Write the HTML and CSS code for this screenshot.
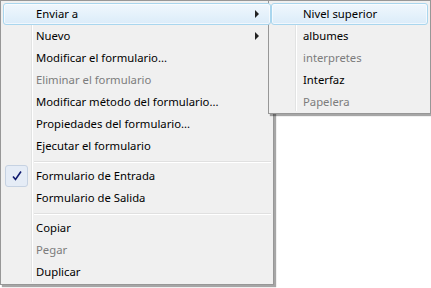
FILE: index.html
```html
<!DOCTYPE html>
<html lang="es">
<head>
  <meta charset="UTF-8" />
  <title>Menú contextual</title>
  <link rel="stylesheet" href="styles.css">
</head>
<body>
  <div class="desk">
    <div class="menu main">
      <div class="item hot">Enviar a<span class="arrow"></span></div>
      <div class="item">Nuevo<span class="arrow"></span></div>
      <div class="item">Modificar el formulario...</div>
      <div class="item off">Eliminar el formulario</div>
      <div class="item">Modificar método del formulario...</div>
      <div class="item">Propiedades del formulario...</div>
      <div class="item">Ejecutar el formulario</div>
      <div class="sep"></div>
      <div class="item checked">
        <span class="check">
          <svg width="12" height="12" viewBox="0 0 12 12"><path d="M2 6.5 L4.5 9.5 L10 1.5" fill="none" stroke="#101a6e" stroke-width="1.6"/></svg>
        </span>
        Formulario de Entrada
      </div>
      <div class="item">Formulario de Salida</div>
      <div class="sep"></div>
      <div class="item">Copiar</div>
      <div class="item off">Pegar</div>
      <div class="item">Duplicar</div>
    </div>

    <div class="menu sub">
      <div class="item hot">Nivel superior</div>
      <div class="item">albumes</div>
      <div class="item off">interpretes</div>
      <div class="item">Interfaz</div>
      <div class="item off">Papelera</div>
    </div>
  </div>
</body>
</html>
```

FILE: styles.css
```css
* {
  margin: 0;
  padding: 0;
  box-sizing: border-box;
}

body {
  background: #fff;
  font-family: 'Noto Sans', 'Segoe UI', sans-serif;
  font-size: 11.3px;
  color: #000;
}

.desk {
  position: relative;
  width: 431px;
  height: 288px;
  overflow: hidden;
}

.menu {
  background: #f0f0f0;
  border: 1px solid #979797;
  box-shadow: 2px 2px 1px rgba(0, 0, 0, 0.35);
  padding: 2px 2px;
  position: relative;
}

/* gutter line next to icon column */
.menu::before {
  content: '';
  position: absolute;
  top: 2px;
  bottom: 2px;
  width: 1px;
  background: #e2e3e3;
  box-shadow: 1px 0 0 #fff;
}

.main {
  width: 274px;
  height: 285px;
}

.main::before {
  left: 30px;
}

.sub {
  position: absolute;
  left: 268px;
  top: 0;
  width: 163px;
  height: 114px;
}

.sub::before {
  left: 26px;
}

.item {
  position: relative;
  z-index: 1;
  height: 22px;
  line-height: 20px;
  border: 1px solid transparent;
  border-radius: 3px;
  padding-left: 32px;
  white-space: nowrap;
}

.sub .item {
  padding-left: 31px;
}

.item.hot {
  border-color: #a9d6ee;
  background: linear-gradient(#f0f7fd, #dbecf9);
  box-shadow: inset 0 0 0 1px rgba(255, 255, 255, 0.6);
}

.item.off {
  color: #7c7c7c;
}

.arrow {
  position: absolute;
  right: 11px;
  top: 6px;
  width: 0;
  height: 0;
  border-top: 4px solid transparent;
  border-bottom: 4px solid transparent;
  border-left: 4px solid #222;
}

.check {
  position: absolute;
  left: 1px;
  top: -1px;
  width: 23px;
  height: 22px;
  border: 1px solid #c6d2e2;
  border-radius: 3px;
  background: #e5ecf6;
  display: flex;
  align-items: center;
  justify-content: center;
}

.sep {
  height: 8px;
  padding-top: 4px;
  margin-left: 31px;
  position: relative;
  z-index: 1;
}

.sep::after {
  content: '';
  display: block;
  height: 1px;
  background: #e0e0e0;
  box-shadow: 0 1px 0 #fff;
}
```
